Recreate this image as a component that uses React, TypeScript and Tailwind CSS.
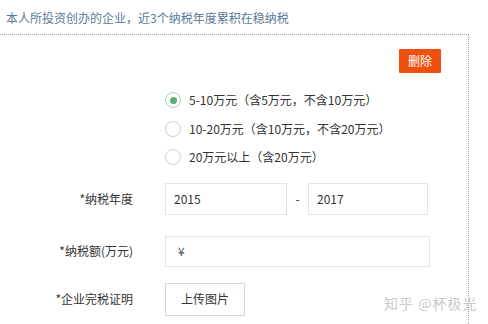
export default function App() {
  const font = { fontFamily: '"Noto Sans CJK SC", "Noto Sans", sans-serif' }
  const options = [
    { label: '5-10万元（含5万元，不含10万元）', checked: true },
    { label: '10-20万元（含10万元，不含20万元）', checked: false },
    { label: '20万元以上（含20万元）', checked: false },
  ]

  return (
    <div className="w-[488px] h-[324px] bg-white overflow-hidden relative" style={font}>
      <p className="pl-[6px] pt-[9px] h-[34px] text-[12px] leading-[18px] text-[#5b7a99]">
        本人所投资创办的企业，近3个纳税年度累积在稳纳税
      </p>

      <div className="w-[469px] h-[300px] border-t border-r border-dotted border-[#9aa3ad]">
        {/* Delete */}
        <div className="flex justify-end pt-[14px] pr-[27px]">
          <button className="w-[42px] h-[24px] bg-[#f0500f] text-white text-[12px] leading-[24px] rounded-[1px]">删除</button>
        </div>

        {/* Options */}
        <div className="pl-[165px] pt-[19px] flex flex-col gap-[12px]">
          {options.map((o) => (
            <div key={o.label} className="flex items-center h-[16.5px] gap-[8px]">
              <span className={`w-[16px] h-[16px] rounded-full border flex items-center justify-center ${o.checked ? 'border-[#a9d3b5]' : 'border-[#cfcfcf]'}`}>
                {o.checked && <span className="w-[7px] h-[7px] rounded-full bg-[#5aad75]" />}
              </span>
              <span className="text-[12px] text-[#333]">{o.label}</span>
            </div>
          ))}
        </div>

        {/* Year */}
        <div className="flex items-center mt-[17px] h-[32px]">
          <span className="w-[133px] text-right text-[12px] text-[#333]">*纳税年度</span>
          <div className="ml-[32px] w-[122px] h-[32px] border border-[#e3e3e3] flex items-center pl-[8px] text-[12px] text-[#333]">2015</div>
          <span className="w-[21px] text-center text-[12px] text-[#333]">-</span>
          <div className="w-[120px] h-[32px] border border-[#e3e3e3] flex items-center pl-[8px] text-[12px] text-[#333]">2017</div>
        </div>

        {/* Amount */}
        <div className="flex items-center mt-[21px] h-[31px]">
          <span className="w-[133px] text-right text-[12px] text-[#333]">*纳税额(万元)</span>
          <div className="ml-[32px] w-[265px] h-[31px] border border-[#e3e3e3] flex items-center pl-[12px] text-[12px] text-[#555]">¥</div>
        </div>

        {/* Upload */}
        <div className="flex items-center mt-[16px] h-[33px]">
          <span className="w-[133px] text-right text-[12px] text-[#333]">*企业完税证明</span>
          <button className="ml-[32px] w-[80px] h-[33px] border border-[#d6d6d6] bg-white text-[12px] text-[#333]">上传图片</button>
        </div>
      </div>

      <span className="absolute left-[384px] top-[293px] text-[14px] text-[#c9c9c9] tracking-[1px]">知乎 @杯极光</span>
    </div>
  )
}
